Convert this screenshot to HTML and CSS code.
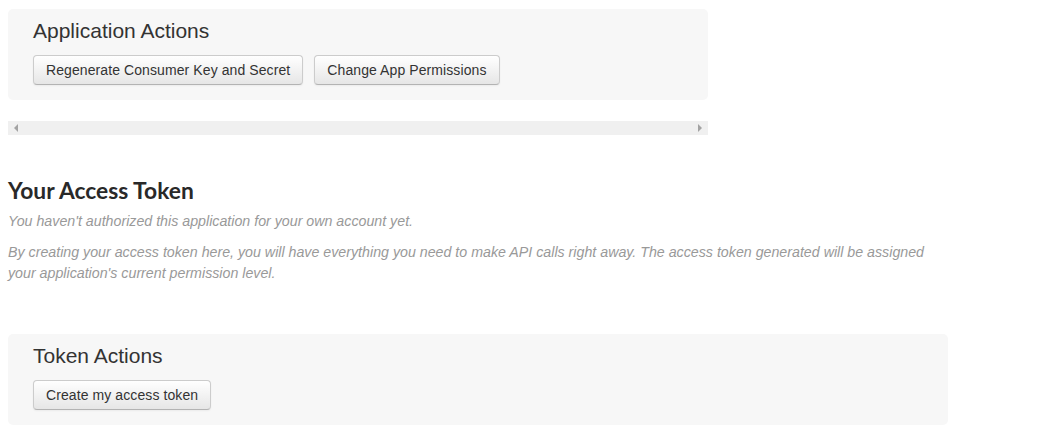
FILE: index.html
```html
<!DOCTYPE html>
<html>
<head>
<meta charset="utf-8">
<link rel="stylesheet" href="styles.css">
</head>
<body>
<div class="page">
  <div class="panel panel-app">
    <h3 class="panel-title">Application Actions</h3>
    <div class="actions">
      <button class="btn">Regenerate Consumer Key and Secret</button>
      <button class="btn">Change App Permissions</button>
    </div>
  </div>
  <div class="hscroll">
    <span class="arrow arrow-left"></span>
    <span class="arrow arrow-right"></span>
  </div>
  <h2 class="section-title">Your Access Token</h2>
  <p class="note">You haven't authorized this application for your own account yet.</p>
  <p class="note">By creating your access token here, you will have everything you need to make API calls right away. The access token generated will be assigned your application's current permission level.</p>
  <div class="panel panel-token">
    <h3 class="panel-title">Token Actions</h3>
    <div class="actions">
      <button class="btn">Create my access token</button>
    </div>
  </div>
</div>
</body>
</html>
```
FILE: styles.css
```css
html, body {
  margin: 0;
  padding: 0;
  background: #fff;
}
body {
  font-family: "Liberation Sans", Arial, sans-serif;
  color: #333;
}
.page {
  padding: 9px 8px 0 8px;
  display: flex;
  flex-direction: column;
  align-items: flex-start;
}
.panel {
  background: #f7f7f7;
  border-radius: 5px;
  padding: 9px 25px 15px 25px;
  box-sizing: border-box;
}
.panel-app { width: 700px; height: 91px; }
.panel-token { width: 940px; height: 91px; margin-top: 50px; }
.panel-title {
  margin: 0;
  font-size: 21px;
  font-weight: normal;
  line-height: 26px;
  color: #333;
}
.actions {
  display: flex;
  gap: 11px;
  margin-top: 11px;
}
.btn {
  font-family: "Liberation Sans", Arial, sans-serif;
  font-size: 14px;
  letter-spacing: 0.09px;
  color: #333;
  height: 30px;
  padding: 0 12px;
  border: 1px solid #ccc;
  border-bottom-color: #b3b3b3;
  border-radius: 4px;
  background: linear-gradient(#ffffff, #e6e6e6);
  box-shadow: inset 0 1px 0 rgba(255,255,255,0.2), 0 1px 2px rgba(0,0,0,0.05);
  cursor: pointer;
}
.hscroll {
  margin-top: 21px;
  width: 700px;
  height: 14px;
  background: #f0f0f0;
  display: flex;
  align-items: center;
  justify-content: space-between;
  padding: 0 6px;
  box-sizing: border-box;
}
.arrow {
  width: 0;
  height: 0;
  border-top: 4px solid transparent;
  border-bottom: 4px solid transparent;
}
.arrow-left { border-right: 4px solid #a3a3a3; }
.arrow-right { border-left: 4px solid #a3a3a3; }
.section-title {
  margin: 42px 0 0 0;
  font-family: Lato, "Open Sans", sans-serif;
  font-weight: 700;
  font-size: 22.8px;
  line-height: 26px;
  color: #292929;
}
.note {
  margin: 8px 0 0 0;
  font-style: italic;
  font-size: 14.23px;
  line-height: 21px;
  color: #999;
  max-width: 935px;
}
.note + .note { margin-top: 10px; }
```
